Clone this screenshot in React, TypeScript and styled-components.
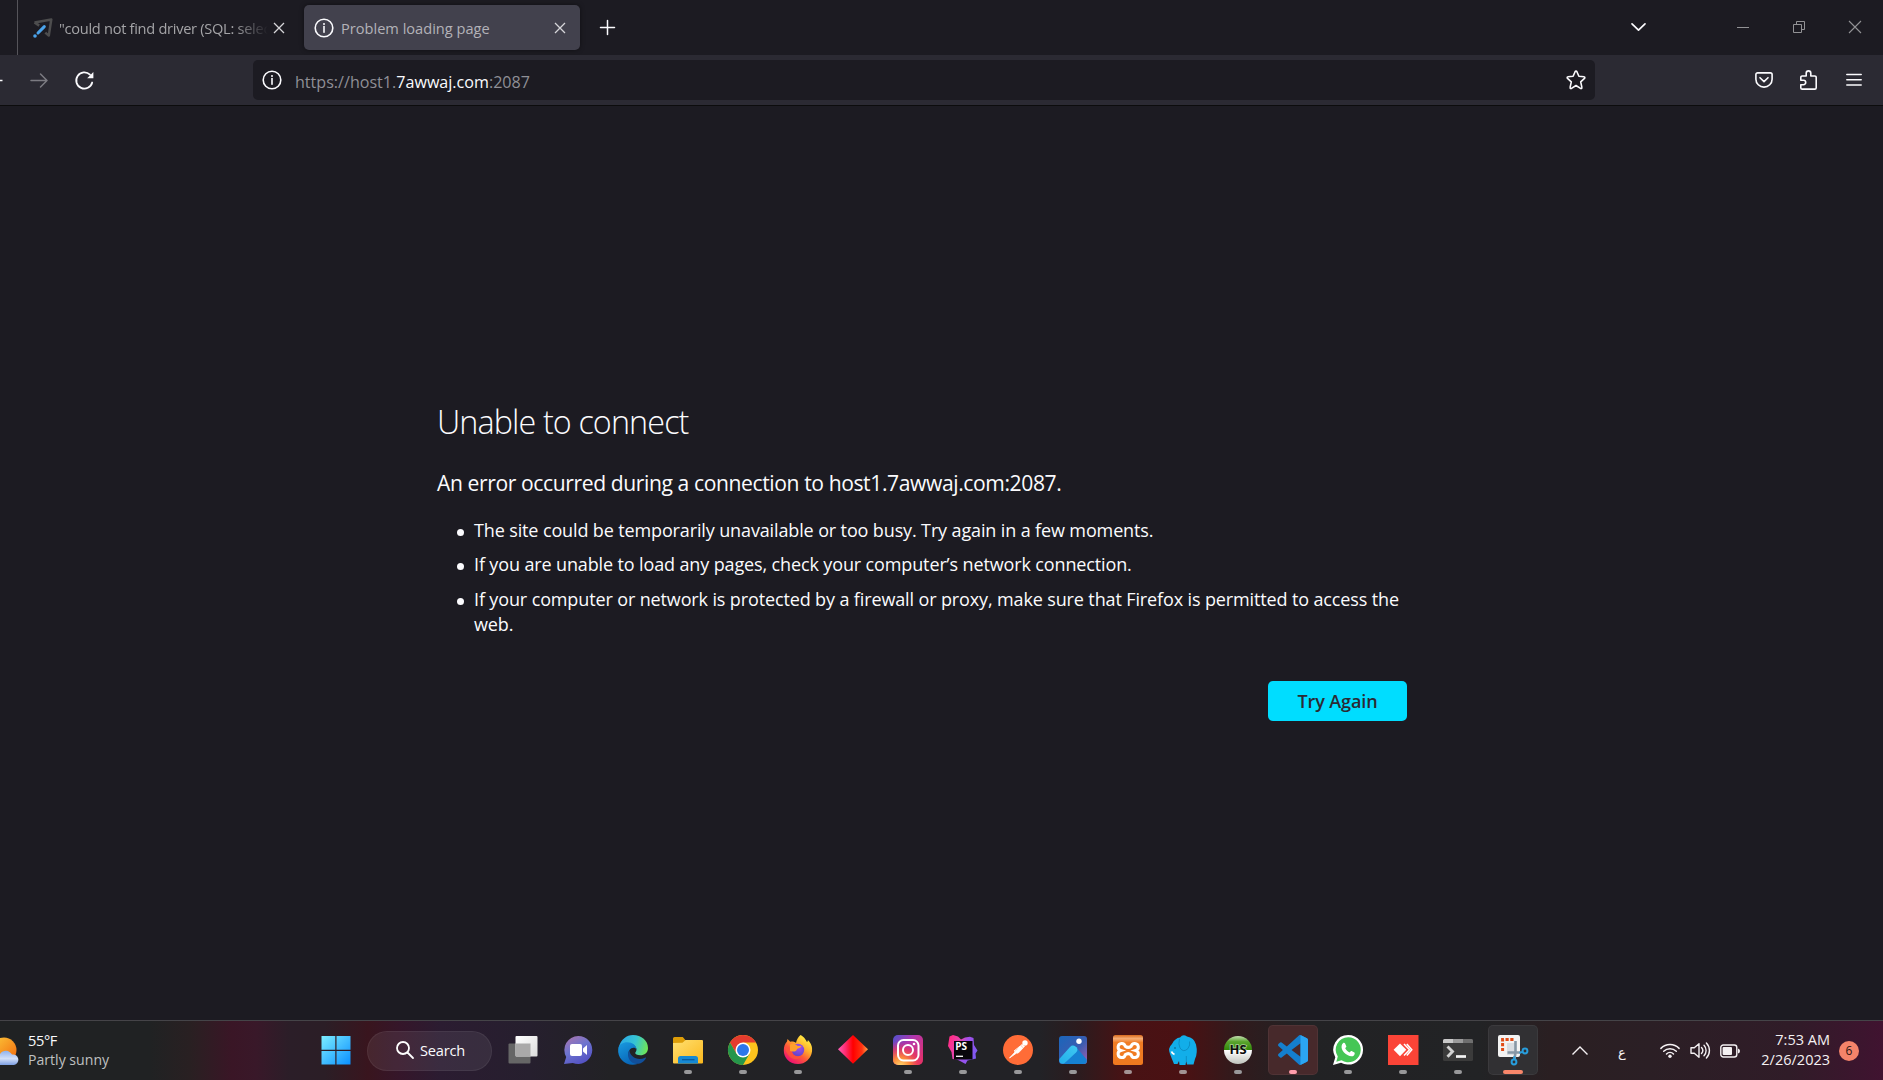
import React from 'react';
import styled, { createGlobalStyle } from 'styled-components';

const Global = createGlobalStyle`
  *, *::before, *::after { box-sizing: border-box; }
  body { margin: 0; background: #1c1b22; overflow: hidden; }
  svg { display: block; flex: none; overflow: visible; }
  button { font: inherit; border: 0; padding: 0; background: none; color: inherit; }
`;

const Desktop = styled.div`
  width: 1883px;
  height: 1080px;
  display: flex;
  flex-direction: column;
  overflow: hidden;
  background: #1c1b22;
  color: #fbfbfe;
  font-family: 'Open Sans', 'Noto Sans', sans-serif;
  white-space: nowrap;
`;

/* ---------- browser chrome ---------- */

const TabBar = styled.header`
  height: 55px;
  flex: none;
  display: flex;
  padding-left: 17px;
`;

const Tab = styled.div<{ $active?: boolean }>`
  display: flex;
  align-items: center;
  width: ${p => (p.$active ? 276 : 287)}px;
  height: ${p => (p.$active ? 45 : 55)}px;
  margin-top: ${p => (p.$active ? 5 : 0)}px;
  padding: ${p => (p.$active ? '0 15px 0 10px' : '0 20px 0 15px')};
  gap: ${p => (p.$active ? 7 : 6)}px;
  border-left: ${p => (p.$active ? '0' : '1px solid #55545a')};
  border-radius: ${p => (p.$active ? 5 : 0)}px;
  background: ${p => (p.$active ? '#42414d' : 'transparent')};
  box-shadow: ${p => (p.$active ? '0 0 5px rgba(0, 0, 0, 0.45)' : 'none')};
  color: ${p => (p.$active ? '#b3b2b8' : '#a4a4a7')};
`;

const TabTitle = styled.span<{ $fade?: boolean }>`
  flex: 1;
  min-width: 0;
  overflow: hidden;
  font-size: 14.6px;
  line-height: 24px;
  letter-spacing: ${p => (p.$fade ? -0.28 : 0)}px;
  mask-image: ${p => (p.$fade ? 'linear-gradient(90deg, #000 calc(100% - 34px), transparent 100%)' : 'none')};
`;

const CloseTab = styled.button`
  display: grid;
  place-items: center;
  color: #d6d6da;
`;

const NewTab = styled.button`
  width: 55px;
  height: 55px;
  display: grid;
  place-items: center;
`;

const WindowControls = styled.div`
  margin-left: auto;
  height: 54px;
  display: flex;
  color: #929295;
`;

const WindowButton = styled.button<{ $wide?: boolean }>`
  width: ${p => (p.$wide ? 154 : 56)}px;
  color: ${p => (p.$wide ? '#fbfbfe' : 'inherit')};
  display: grid;
  place-items: center;
`;

const NavBar = styled.nav`
  height: 51px;
  flex: none;
  display: flex;
  align-items: center;
  background: #2b2a33;
  border-bottom: 1px solid #0c0c0d;
  padding-right: 7px;
`;

const NavButtons = styled.div`
  width: 253px;
  display: flex;
  align-items: center;
`;

const NavButton = styled.button<{ $dim?: boolean; $w?: number }>`
  width: ${p => p.$w ?? 45}px;
  height: 45px;
  display: grid;
  place-items: center;
  color: ${p => (p.$dim ? '#7c7b82' : '#fbfbfe')};
`;

const BackButton = styled(NavButton)`
  justify-items: end;
  width: 17px;
  margin-left: -14px;
`;

const UrlBar = styled.div`
  width: 1342px;
  height: 40px;
  display: flex;
  align-items: center;
  gap: 13px;
  padding: 0 9px;
  border-radius: 5px;
  background: #1c1b22;
`;

const Url = styled.span`
  flex: 1;
  color: #8f8f96;
  font-size: 16.1px;
  line-height: 24px;
  padding-top: 3px;
  b { color: #fbfbfe; font-weight: 400; }
`;

const ToolbarEnd = styled.div`
  margin-left: auto;
  display: flex;
`;

/* ---------- error page ---------- */

const Page = styled.main`
  flex: 1;
  padding: 295px 476px 0 437px;
`;

const Title = styled.h1`
  margin: 0;
  font-size: 32.3px;
  font-weight: 300;
  line-height: 40px;
  letter-spacing: -0.88px;
`;

const Lead = styled.p`
  margin: 27px 0 0;
  font-size: 21.1px;
  line-height: 30px;
  letter-spacing: -0.4px;
`;

const Reasons = styled.ul`
  margin: 20px 0 0;
  padding: 0 0 0 37px;
  display: flex;
  flex-direction: column;
  gap: 9.4px;
  list-style: none;
  font-size: 18px;
  line-height: 25px;
  letter-spacing: -0.13px;
`;

const Reason = styled.li`
  position: relative;
  width: 932px;
  white-space: normal;

  &::before {
    content: '';
    position: absolute;
    left: -17px;
    top: 11px;
    width: 7px;
    height: 7px;
    border-radius: 50%;
    background: #fbfbfe;
  }
`;

const Actions = styled.div`
  display: flex;
  justify-content: flex-end;
  margin-top: 44px;
`;

const PrimaryButton = styled.button`
  && {
    width: 139px;
    height: 40px;
    border-radius: 5px;
    background: #00ddff;
    color: #2b2a33;
    font-size: 18px;
    font-weight: 600;
    letter-spacing: -0.1px;
  }
`;

/* ---------- taskbar ---------- */

const Taskbar = styled.footer`
  height: 60px;
  flex: none;
  display: flex;
  align-items: center;
  border-top: 1px solid #454448;
  background: linear-gradient(
    90deg,
    #202223 0, #202223 150px, #292022 190px, #3a1626 232px, #391829 256px,
    #2b1e28 290px, #2b1e26 325px, #39151e 368px, #35162a 400px, #2b1c31 440px, #261f2e 530px,
    #222225 610px, #222226 1040px, #2c1b1e 1080px, #481214 1125px, #4a1113 1185px, #311a1c 1235px,
    #222224 1300px, #222325 1480px, #2a1f22 1550px, #2b1f25 1650px, #301c28 1790px, #401330 1883px
  );
`;

const Weather = styled.section`
  width: 308px;
  display: flex;
  align-items: center;
  gap: 9px;
  font-size: 14.1px;
  line-height: 20px;
`;

const Stack = styled.div<{ $right?: boolean }>`
  display: flex;
  flex-direction: column;
  text-align: ${p => (p.$right ? 'right' : 'left')};
  margin-bottom: 2px;
`;

const Muted = styled.span`
  color: #bfc0c0;
`;

const Temperature = styled.span`
  font-size: 14.6px;
  letter-spacing: -0.4px;
`;

const AppRow = styled.div`
  display: flex;
  align-items: center;
`;

const Cell = styled.div`
  width: 55px;
  height: 59px;
  display: flex;
  justify-content: center;
`;

const Plate = styled.div<{ $bg?: string }>`
  width: 50px;
  height: 50px;
  margin-top: 4px;
  display: flex;
  flex-direction: column;
  align-items: center;
  justify-content: space-between;
  padding-top: 10px;
  border-radius: 5px;
  background: ${p => p.$bg ?? 'transparent'};
  box-shadow: ${p => (p.$bg ? 'inset 0 0 0 1px rgba(255, 255, 255, 0.05)' : 'none')};
`;

const Indicator = styled.span<{ $color: string; $w: number }>`
  width: ${p => p.$w}px;
  height: 4px;
  margin-bottom: 1px;
  border-radius: 2px;
  background: ${p => p.$color};
`;

const SearchBox = styled.div`
  width: 125px;
  height: 40px;
  margin: 0 3px 0 4px;
  display: flex;
  align-items: center;
  gap: 6px;
  padding: 0 0 1px 28px;
  border-radius: 20px;
  border: 1px solid rgba(255, 255, 255, 0.06);
  background: rgba(255, 255, 255, 0.075);
  font-size: 14.6px;
  letter-spacing: -0.2px;
`;

const Tray = styled.section`
  flex: 1;
  display: flex;
  align-items: center;
  padding-left: 32px;
  padding-right: 24px;
  color: #f4f0f2;
`;

const Language = styled.span`
  width: 10px;
  margin: 4px 33px 0 29px;
  text-align: center;
  font-family: 'DejaVu Sans', sans-serif;
  font-size: 13px;
`;

const Status = styled.div`
  display: flex;
  align-items: center;
  gap: 10px;
`;

const Clock = styled.div`
  margin-left: auto;
  font-size: 14.5px;
  line-height: 20px;
`;

const Badge = styled.span`
  width: 20px;
  height: 20px;
  margin-left: 9px;
  display: grid;
  place-items: center;
  border-radius: 50%;
  background: #f4846a;
  color: #2a1512;
  font-size: 12px;
  line-height: 20px;
`;

/* ---------- small glyphs ---------- */

const Info = () => (
  <svg width="20" height="20" viewBox="0 0 20 20" fill="none" stroke="#fbfbfe" strokeWidth="1.6">
    <circle cx="10" cy="10" r="8.8" />
    <path d="M10 8.6v5.6" strokeLinecap="round" />
    <circle cx="10" cy="6" r="1" fill="#fbfbfe" stroke="none" />
  </svg>
);

const Cross = ({ s = 10, w = 1.3 }: { s?: number; w?: number }) => (
  <svg width={s} height={s} viewBox={`0 0 ${s} ${s}`} stroke="currentColor" strokeWidth={w} fill="none">
    <path d={`M0 0L${s} ${s}M${s} 0L0 ${s}`} />
  </svg>
);

const Favicon = () => (
  <svg width="20" height="20" viewBox="0 0 20 20" fill="none">
    <path d="M1.5 4.4L18.3 1.4L15.8 17.6L12.3 14.6M1.5 4.4L6.2 7.6" stroke="#4d4d4e" strokeWidth="2.5" strokeLinejoin="round" />
    <path d="M5 15L11.3 8.6" stroke="#4aa3ea" strokeWidth="3" strokeLinecap="round" />
    <circle cx="2" cy="18" r="1.8" fill="#4aa3ea" />
  </svg>
);

const Forward = () => (
  <svg width="18" height="15" viewBox="0 0 18 15" fill="none" stroke="currentColor" strokeWidth="1.5" strokeLinecap="round" strokeLinejoin="round">
    <path d="M1 7.5H17M10.5 1L17 7.5L10.5 14" />
  </svg>
);

const BackLine = () => (
  <svg width="17" height="15" viewBox="0 0 17 15" fill="none" stroke="currentColor" strokeWidth="1.6">
    <path d="M0 7.5H16.5M7 1L0.5 7.5L7 14" />
  </svg>
);

const Reload = () => (
  <svg width="19" height="19" viewBox="0 0 19 19" fill="none">
    <path d="M17.2 11.5A8.1 8.1 0 1 1 15 3.7" stroke="currentColor" strokeWidth="1.8" strokeLinecap="round" />
    <path d="M18.4 1v6.3h-6.2z" fill="currentColor" />
  </svg>
);

const Star = () => (
  <svg width="20" height="20" viewBox="0 0 20 20" fill="none" stroke="#fbfbfe" strokeWidth="1.6" strokeLinejoin="round">
    <path d="M9.1 1.7a1 1 0 0 1 1.8 0l2 4.6 5.1.5a.9.9 0 0 1 .5 1.6l-3.8 3.4 1.2 5.6a.9.9 0 0 1-1.4 1L10 15.500l-4.500 2.900a.9.9 0 0 1-1.400-1l1.200-5.600L1.500 8.400a.9.9 0 0 1 .5-1.600l5.100-.5z" />
  </svg>
);

const Pocket = () => (
  <svg width="18" height="16" viewBox="0 0 18 16" fill="none" stroke="currentColor" strokeWidth="1.6" strokeLinecap="round" strokeLinejoin="round">
    <path d="M2.600.9h12.800a1.700 1.700 0 0 1 1.700 1.700v4.600a8.100 7.900 0 0 1-16.200 0V2.600A1.700 1.700 0 0 1 2.600.9z" />
    <path d="M5 5.700l4 3.900 4-3.900" />
  </svg>
);

const Puzzle = () => (
  <svg width="17" height="20" viewBox="0 0 17 20" fill="none" stroke="currentColor" strokeWidth="1.6" strokeLinejoin="round">
    <path d="M2.200 6h4V3.200a2.300 2.300 0 0 1 4.600 0V6h4a1.400 1.400 0 0 1 1.400 1.400v10.300a1.400 1.400 0 0 1-1.400 1.400H2.200A1.400 1.400 0 0 1 .8 17.700V14.700h2.700a2 2 0 0 0 0-4.400H.8V7.400A1.400 1.400 0 0 1 2.200 6z" />
  </svg>
);

const Menu = () => (
  <svg width="16" height="13" viewBox="0 0 16 13" stroke="currentColor" strokeWidth="1.5" strokeLinecap="round">
    <path d="M.8 .5H15.200M.8 5.800H15.200M.8 11.100H15.200" />
  </svg>
);

/* ---------- taskbar drawings ---------- */

const WeatherIcon = () => (
  <svg width="19" height="30" viewBox="0 0 19 30">
    <defs>
      <linearGradient id="sun" x1="0" y1="0" x2="1" y2="1"><stop stopColor="#fcc93a" /><stop offset="1" stopColor="#f2660c" /></linearGradient>
      <linearGradient id="cloud" x1="0" y1="0" x2="0" y2="1"><stop stopColor="#8fb2ee" /><stop offset=".55" stopColor="#d3e0f9" /><stop offset="1" stopColor="#7c9fe2" /></linearGradient>
    </defs>
    <circle cx="4" cy="14" r="12.500" fill="url(#sun)" />
    <path d="M-4 29V21a6 6 0 0 1 4-3 7 7 0 0 1 12 .5 5.300 5.300 0 0 1 2 10.500z" fill="url(#cloud)" />
  </svg>
);

const Windows = () => (
  <svg width="30" height="30" viewBox="0 0 30 30">
    <defs><linearGradient id="win" x1="0" y1="0" x2="1" y2="1"><stop stopColor="#7cedff" /><stop offset="1" stopColor="#0a8fff" /></linearGradient></defs>
    <path d="M.5 1h13.800v13.800H.5zM15.500 1H29.500v13.800H15.500zM.5 16h13.800V29.500H.5zM15.500 16H29.500V29.500H15.500z" fill="url(#win)" />
  </svg>
);

const TaskView = () => (
  <svg width="30" height="30" viewBox="0 0 30 30">
    <defs><linearGradient id="tv" x1="0" y1="0" x2="1" y2="1"><stop stopColor="#fff" /><stop offset="1" stopColor="#dcdcdc" /></linearGradient></defs>
    <rect x=".5" y="8.500" width="22" height="20" rx="1" fill="#666" />
    <rect x="7.500" y="1" width="22" height="20.500" rx="1" fill="url(#tv)" />
    <path d="M7.500 8.500h15v13H8.500a1 1 0 0 1-1-1z" fill="#aaa9a9" />
  </svg>
);

const Chat = () => (
  <svg width="30" height="30" viewBox="0 0 30 30">
    <defs><linearGradient id="ch" x1=".1" y1=".1" x2=".6" y2="1"><stop stopColor="#a174b2" /><stop offset=".45" stopColor="#6d74cf" /><stop offset="1" stopColor="#5452c4" /></linearGradient></defs>
    <path d="M15.200 1a14 14 0 1 1-5.400 26.900L1 29l2.200-7A14 14 0 0 1 15.200 1z" fill="url(#ch)" />
    <rect x="7" y="9" width="12" height="12" rx="2" fill="#fff" />
    <path d="M20 13.500l4-3.500v10l-4-3.500z" fill="#fff" />
  </svg>
);

const Edge = () => (
  <svg width="30" height="30" viewBox="0 0 30 30">
    <defs>
      <linearGradient id="e1" x1="0" y1=".3" x2="1" y2=".5"><stop stopColor="#2aa8e6" /><stop offset=".55" stopColor="#36c4d3" /><stop offset="1" stopColor="#6ee558" /></linearGradient>
      <linearGradient id="e2" x1="0" y1="0" x2=".5" y2="1"><stop stopColor="#199be0" /><stop offset="1" stopColor="#0866b8" /></linearGradient>
    </defs>
    <path d="M1 11.500C3 4.500 8.500 0 15 0c8.500 0 15 5.600 15 13 0 4.800-3.700 7.300-7.600 7.300-3.500 0-5.200-1-5.200-2.200 0-1 1.300-1.500 1.300-3.600C18.500 9.500 8 5 1 11.500z" fill="url(#e1)" />
    <path d="M.2 14C.5 9.500 5 7.300 9.200 7.300c5.300 0 9.300 3.200 9.300 7.200-1-2.400-5-2.300-7 .5-3 4.300.3 11.500 8 14C9 32.500-1 24 .2 14z" fill="url(#e2)" />
    <path d="M11.500 15c-3.600 5-.3 12 5 13.500 5 1.300 9.400-1.300 11.300-5 .4-.8-.2-1.200-.9-.8-7 3.400-15.500-1-15.400-7.700z" fill="#114f9a" />
  </svg>
);

const Explorer = () => (
  <svg width="30" height="30" viewBox="0 0 30 30">
    <defs><linearGradient id="ex" x1="0" y1="0" x2="1" y2="1"><stop stopColor="#ffe071" /><stop offset="1" stopColor="#fbb81d" /></linearGradient></defs>
    <path d="M0 3.500a1.500 1.500 0 0 1 1.500-1.500h8.300l2.700 3.300V10H0z" fill="#dd9d08" />
    <path d="M0 8l9.500-.2L12.500 5H29a1 1 0 0 1 1 1v21.500a1 1 0 0 1-1 1H1a1 1 0 0 1-1-1z" fill="url(#ex)" />
    <path d="M5 28.500V23.500a2.500 2.500 0 0 1 2.500-2.500h15a2.500 2.500 0 0 1 2.500 2.500v5z" fill="#1689d3" />
    <path d="M9 24.700h12.500" stroke="#095a9e" strokeWidth="1.300" />
  </svg>
);

const Chrome = () => (
  <svg width="30" height="30" viewBox="0 0 30 30">
    <circle cx="15" cy="15" r="15" fill="#fcc31d" />
    <path d="M2 7.500A15 15 0 0 1 28 7.500H15L8.500 18.750z" fill="#e33b2e" />
    <path d="M2 7.500A15 15 0 0 0 15 30l6.500-11.250H8.500z" fill="#25964b" />
    <circle cx="15" cy="15" r="7.500" fill="#fff" />
    <circle cx="15" cy="15" r="6" fill="#2c77ea" />
  </svg>
);

const Firefox = () => (
  <svg width="30" height="30" viewBox="0 0 30 30">
    <defs>
      <linearGradient id="f1" x1=".85" y1=".1" x2=".25" y2=".95"><stop stopColor="#fff044" /><stop offset=".35" stopColor="#ffb22d" /><stop offset=".62" stopColor="#ff5b38" /><stop offset="1" stopColor="#ee1271" /></linearGradient>
      <radialGradient id="f2" cx=".6" cy=".3" r=".8"><stop stopColor="#a350ef" /><stop offset="1" stopColor="#5a43c4" /></radialGradient>
    </defs>
    <path d="M17.500 0c4 2 5.300 5 6.500 7 1-.4.800-2 .8-2C28.500 8.500 29.500 12 29 16.500A14.200 14.200 0 0 1 15 29C6.500 29 .8 23 .8 15.500.8 11.500 2 8.500 4 6.500L4.500 4l2.700 2.700c2.400-.5 4.600 0 5.800 1.300C13.500 5 15 2 17.500 0z" fill="url(#f1)" />
    <circle cx="15" cy="15" r="6.200" fill="url(#f2)" />
    <path d="M7 9.500c2.500-1.500 6-.3 7.500 1.500h4c-.4 1.600-2.600 1.900-4 2.800-.8.700-.7 2-2.300 2.500-2.500.6-3.500-.6-5.200.2z" fill="#ffa02c" />
    <path d="M2 12.500c3 .5 5 2 6 4.500 2 4.500 7 5.500 11 3.500-2 4-8 5-12 1.500C4 19 2.500 16 2 12.500z" fill="#ff5a32" opacity=".65" />
  </svg>
);

const Diamond = () => (
  <svg width="30" height="30" viewBox="0 0 30 30">
    <defs><linearGradient id="di"><stop stopColor="#ff60b8" /><stop offset=".25" stopColor="#ff2b70" /><stop offset=".5" stopColor="#ff0000" /><stop offset=".8" stopColor="#ff3210" /><stop offset="1" stopColor="#ffa44a" /></linearGradient></defs>
    <path d="M15 0L30 14.300L15 28.700L0 14.300z" fill="url(#di)" />
  </svg>
);

const Instagram = () => (
  <svg width="30" height="30" viewBox="0 0 30 30">
    <defs>
      <linearGradient id="i1" x1="0" y1="0" x2="1" y2=".8"><stop stopColor="#4d52cf" /><stop offset=".45" stopColor="#b236ac" /><stop offset="1" stopColor="#e2306b" /></linearGradient>
      <radialGradient id="i2" cx=".25" cy="1.050" r=".85"><stop stopColor="#ffdc72" /><stop offset=".35" stopColor="#fc8c3a" /><stop offset=".7" stopColor="#ef3b55" stopOpacity=".7" /><stop offset="1" stopColor="#d62b80" stopOpacity="0" /></radialGradient>
    </defs>
    <rect width="30" height="30" rx="5" fill="url(#i1)" />
    <rect width="30" height="30" rx="5" fill="url(#i2)" />
    <g fill="none" stroke="#fff" strokeWidth="2">
      <rect x="5" y="5" width="20.500" height="20.500" rx="5.500" />
      <circle cx="15" cy="15" r="5" />
    </g>
    <circle cx="21" cy="9" r="1.300" fill="#fff" />
  </svg>
);

const PhpStorm = () => (
  <svg width="30" height="30" viewBox="0 0 30 30">
    <defs><linearGradient id="ps" x1="0" y1=".3" x2="1" y2=".7"><stop stopColor="#ff2d86" /><stop offset=".35" stopColor="#e347b5" /><stop offset=".5" stopColor="#a44fe8" /><stop offset="1" stopColor="#7a5af6" /></linearGradient></defs>
    <path d="M1.500 1.500L5 0l5 1.500 3 3L17 2.500l5-.8 3.500 1.300.5 7 3.500 5.500-2 3 .5 5-4 1-4.500 1-2 3.500L13 26.500l-4-2-4.500-.5L3.500 17 0 11z" fill="url(#ps)" />
    <rect x="6" y="6" width="18.500" height="18.500" fill="#08060b" />
    <text x="7.200" y="15" fill="#fff" fontFamily="'Open Sans', sans-serif" fontWeight="700" fontSize="10">PS</text>
    <path d="M8 21.300h7" stroke="#fff" strokeWidth="1.300" />
  </svg>
);

const Postman = () => (
  <svg width="30" height="30" viewBox="0 0 30 30">
    <circle cx="15" cy="15" r="15" fill="#ff6c37" />
    <path d="M6.500 23l6-6.500-1.500-.5L19 9.500l2.500 2-6.500 6.800-1-.6z" fill="#fff" stroke="#fff" strokeWidth=".8" strokeLinejoin="round" />
    <path d="M14.500 13.700l-2 2M17.500 10l2.800 3" stroke="#ffb79e" strokeWidth=".8" />
    <circle cx="22" cy="8" r="2.700" fill="#fff" />
  </svg>
);

const Photos = () => (
  <svg width="30" height="30" viewBox="0 0 30 30">
    <defs>
      <linearGradient id="p1" x1="0" y1="0" x2="1" y2="1"><stop stopColor="#1a66bb" /><stop offset=".55" stopColor="#3a5cb0" /><stop offset="1" stopColor="#a360ae" /></linearGradient>
      <linearGradient id="p2" x1="1" y1="0" x2="0" y2="1"><stop stopColor="#3fc9f2" /><stop offset="1" stopColor="#22aeea" /></linearGradient>
    </defs>
    <rect x="1" y="1" width="28" height="28" rx="3" fill="url(#p1)" />
    <path d="M12 12.500Q15 9 18 12L28.700 24.500Q29.500 29 25.500 29H6L17 17z" fill="#1681d2" />
    <path d="M1.300 24L12 12Q15 9 18.500 12.300Q20.500 15 18 17.500L6.500 28.300Q4 29.500 2.200 28Q.8 26 1.300 24z" fill="url(#p2)" />
    <circle cx="21" cy="6.300" r="2.700" fill="#fff" />
  </svg>
);

const Xampp = () => (
  <svg width="30" height="30" viewBox="0 0 30 30">
    <defs><linearGradient id="xa" x1="0" y1="0" x2="0" y2="1"><stop stopColor="#d8691d" /><stop offset=".12" stopColor="#f6ad75" /><stop offset=".25" stopColor="#f07c24" /><stop offset="1" stopColor="#f0791f" /></linearGradient></defs>
    <rect width="30" height="30" rx="2.500" fill="url(#xa)" />
    <path d="M12.200 11.200a3.600 3.600 0 1 0-4.500 4.300 3.600 3.600 0 1 0 4.500 4.300q3-2.300 6 0a3.600 3.600 0 1 0 4.500-4.300 3.600 3.600 0 1 0-4.500-4.300q-3 2.300-6 0z" fill="none" stroke="#fff" strokeWidth="3" />
  </svg>
);

const Elephant = () => (
  <svg width="30" height="30" viewBox="0 0 30 30">
    <path d="M4 9Q7 3 12 2.500Q15-1.500 19 1.500Q26 2.500 28 9.500Q30 18 27 24L25.500 29.500H19L18.200 26L17.500 30H11.500L11 26L9.500 29H6Q3.500 23 2 19Q-.5 13 4 9z" fill="#12aee9" />
    <path d="M11.500 4Q10 9 12 13Q15.500 18 20 13.500Q22.500 10 21.500 6.500M18.300 27V21" fill="none" stroke="#0c8fc6" strokeWidth="1" />
    <path d="M3.500 16.500q1 2.600 3 2.800" stroke="#fff" strokeWidth="2" fill="none" />
    <circle cx="7" cy="13" r=".8" fill="#0b5472" />
  </svg>
);

const HeidiSql = () => (
  <svg width="30" height="30" viewBox="0 0 30 30">
    <defs><linearGradient id="hs" x1="0" y1="0" x2="0" y2="1"><stop stopColor="#c6e0b2" /><stop offset=".2" stopColor="#5aa52f" /><stop offset=".49" stopColor="#338a0a" /><stop offset=".5" stopColor="#fff" /><stop offset="1" stopColor="#bfc3bc" /></linearGradient></defs>
    <circle cx="15" cy="15" r="14" fill="url(#hs)" />
    <text x="15" y="19.300" textAnchor="middle" fill="#0c0c0c" stroke="#ffffff" strokeOpacity=".55" strokeWidth="1.600" paintOrder="stroke" fontFamily="'Open Sans', sans-serif" fontWeight="700" fontSize="13">HS</text>
  </svg>
);

const VsCode = () => (
  <svg width="30" height="30" viewBox="0 0 24 24">
    <path fill="#147fce" d="M23.150 2.587L18.210.21a1.494 1.494 0 0 0-1.705.29l-9.460 8.630-4.120-3.128a.999.999 0 0 0-1.276.057L.327 7.261A1 1 0 0 0 .326 8.740L3.899 12 .326 15.260a1 1 0 0 0 .001 1.479L1.650 17.940a.999.999 0 0 0 1.276.057l4.120-3.128 9.460 8.630a1.492 1.492 0 0 0 1.704.29l4.942-2.377A1.500 1.500 0 0 0 24 20.060V3.939a1.500 1.500 0 0 0-.85-1.352zm-5.146 14.861L10.826 12l7.178-5.448v10.896z" />
    <path fill="#2ba5f2" d="M18 0l5.150 2.587a1.500 1.500 0 0 1 .85 1.352V20.060a1.500 1.500 0 0 1-.85 1.352L18 24z" />
  </svg>
);

const WhatsApp = () => (
  <svg width="30" height="30" viewBox="0 0 30 30">
    <path d="M15.200 0A14.800 14.800 0 1 1 8 27.700L0 30l2.300-7.800A14.800 14.800 0 0 1 15.200 0z" fill="#fff" />
    <path d="M15.200 2.300A12.500 12.500 0 1 1 8.500 25.300L3.300 26.700l1.500-5.100A12.500 12.500 0 0 1 15.200 2.300z" fill="#45c655" />
    <path d="M10 8.200c.5-.5 1.700-.5 2.100.2l1.200 2.800c.2.500-.2 1-1.100 2 .9 1.900 2.500 3.400 4.600 4.200.9-1.100 1.300-1.500 1.800-1.300l2.800 1.400c.7.400.2 2.200-.5 2.900-1.500 1.400-3.700 1.200-6-.1-3-1.600-5.300-4.200-6-6.400-.7-2.300-.3-4.400 1.100-5.700z" fill="#fff" />
  </svg>
);

const AnyDesk = () => (
  <svg width="30" height="30" viewBox="0 0 30 30">
    <rect width="30.500" height="30" fill="#fb4437" />
    <path d="M12 8.500l6.300 6.300L12 21.200l-6.400-6.400z" fill="#fff" />
    <path d="M16 9l5.500 5.800L16 20.600M18.800 9l5 5.800-5 5.800" stroke="#fff" strokeWidth="1.500" fill="none" />
  </svg>
);

const Terminal = () => (
  <svg width="30" height="30" viewBox="0 0 30 30">
    <rect y="4" width="30" height="22" rx="1.500" fill="#3b3b3b" />
    <path d="M0 8V5.500A1.500 1.500 0 0 1 1.500 4H10v4z" fill="#c9c9c9" />
    <path d="M10 4h10v4H10z" fill="#9b9b9b" /><path d="M20 4h8.500A1.500 1.500 0 0 1 30 5.500V8H20z" fill="#6f6f6f" />
    <path d="M4.500 11.500l5 5-5 5.300" stroke="#d2d2d2" strokeWidth="2.900" fill="none" />
    <path d="M13 21.500h10" stroke="#f4f4f4" strokeWidth="2.700" />
  </svg>
);

const Snipping = () => (
  <svg width="30" height="30" viewBox="0 0 30 30">
    <rect x="0" y="0" width="22" height="22" rx="2" fill="#f3f3f3" />
    <path d="M15.500 4.600H4.600V17.500" fill="none" stroke="#e14b16" strokeWidth="3" strokeDasharray="3.200 1.600" />
    <path d="M9 8h8v12H9z" fill="#d9dde2" />
    <path d="M17.500 6v11.500L16.500 24M9.500 17.500h13" stroke="#8797a5" strokeWidth="2.600" fill="none" />
    <g fill="none" stroke="#279ddc" strokeWidth="2"><circle cx="27" cy="16" r="2.400" /><circle cx="16" cy="27" r="2.400" /><path d="M21.500 17.800l3.200-.9M16.300 24.500v-3.300" /></g>
  </svg>
);

const Wifi = () => (
  <svg width="20" height="15" viewBox="0 0 20 15" fill="none" stroke="currentColor" strokeWidth="1.500" strokeLinecap="round">
    <path d="M.9 5.400a12.800 12.800 0 0 1 18.200 0M3.700 8.300a8.900 8.900 0 0 1 12.600 0M6.500 11a5 5 0 0 1 7 0" />
    <circle cx="10" cy="13.300" r="1.700" fill="currentColor" stroke="none" />
  </svg>
);

const Speaker = () => (
  <svg width="20" height="17" viewBox="0 0 20 17" fill="none" stroke="currentColor" strokeWidth="1.400" strokeLinecap="round" strokeLinejoin="round">
    <path d="M1 5.700h3.300L9 1.700v13.600l-4.700-4H1z" />
    <path d="M11.500 5.500a4.500 4.500 0 0 1 0 6M14 3.300a7.500 7.500 0 0 1 0 10.400M16.400 1a10.800 10.800 0 0 1 0 15" />
  </svg>
);

const Battery = () => (
  <svg width="20" height="14" viewBox="0 0 20 14" fill="none">
    <rect x=".8" y="1" width="16" height="12" rx="2.500" stroke="currentColor" strokeWidth="1.400" />
    <rect x="2.600" y="2.900" width="9.400" height="8.200" rx="1" fill="currentColor" />
    <path d="M18 4.500q2 .5 2 2.500t-2 2.500z" fill="currentColor" />
  </svg>
);

type AppItem = { icon: React.FC; color?: string; width?: number; plate?: string };

const apps: AppItem[] = [
  { icon: TaskView },
  { icon: Chat },
  { icon: Edge },
  { icon: Explorer, color: '#98989a' },
  { icon: Chrome, color: '#98989a' },
  { icon: Firefox, color: '#98989a' },
  { icon: Diamond },
  { icon: Instagram, color: '#98989a' },
  { icon: PhpStorm, color: '#98989a' },
  { icon: Postman, color: '#98989a' },
  { icon: Photos, color: '#98989a' },
  { icon: Xampp, color: '#a39394' },
  { icon: Elephant, color: '#a39394' },
  { icon: HeidiSql, color: '#98989a' },
  { icon: VsCode, color: '#ff9dab', plate: '#47292b' },
  { icon: WhatsApp, color: '#98989a' },
  { icon: AnyDesk, color: '#98989a' },
  { icon: Terminal, color: '#98989a' },
  { icon: Snipping, color: '#f8866a', width: 20, plate: '#313033' },
];

const TaskbarApp = ({ icon: Icon, color = 'transparent', width = 8, plate }: AppItem) => (
  <Cell>
    <Plate $bg={plate}>
      <Icon />
      <Indicator $color={color} $w={width} />
    </Plate>
  </Cell>
);

export default function App() {
  return (
    <Desktop>
      <Global />
      <TabBar>
        <Tab>
          <Favicon />
          <TabTitle $fade>"could not find driver (SQL: selec</TabTitle>
          <CloseTab><Cross /></CloseTab>
        </Tab>
        <Tab $active>
          <Info />
          <TabTitle>Problem loading page</TabTitle>
          <CloseTab><Cross /></CloseTab>
        </Tab>
        <NewTab>
          <svg width="15" height="15" viewBox="0 0 15 15" stroke="#fbfbfe" strokeWidth="1.500" strokeLinecap="round"><path d="M7.500.5v14M.5 7.500h14" /></svg>
        </NewTab>
        <WindowControls>
          <WindowButton $wide>
            <svg width="15" height="8" viewBox="0 0 15 8" fill="none" stroke="currentColor" strokeWidth="1.700" strokeLinecap="round" strokeLinejoin="round"><path d="M1 .8l6.500 6.300L14 .8" /></svg>
          </WindowButton>
          <WindowButton>
            <svg width="12" height="1" viewBox="0 0 12 1"><path d="M0 0h12v1H0z" fill="currentColor" /></svg>
          </WindowButton>
          <WindowButton>
            <svg width="12" height="12" viewBox="0 0 12 12" fill="none" stroke="currentColor"><path d="M.5 3.500h8v8h-8zM3.500 3.500v-3h8v8h-3" /></svg>
          </WindowButton>
          <WindowButton><Cross s={12} w={1.1} /></WindowButton>
        </WindowControls>
      </TabBar>

      <NavBar>
        <NavButtons>
          <BackButton><BackLine /></BackButton>
          <NavButton $dim $w={72}><Forward /></NavButton>
          <NavButton $w={16}><Reload /></NavButton>
        </NavButtons>
        <UrlBar>
          <Info />
          <Url>https://host1.<b>7awwaj.com</b>:2087</Url>
          <Star />
        </UrlBar>
        <ToolbarEnd>
          <NavButton><Pocket /></NavButton>
          <NavButton><Puzzle /></NavButton>
          <NavButton><Menu /></NavButton>
        </ToolbarEnd>
      </NavBar>

      <Page>
        <Title>Unable to connect</Title>
        <Lead>An error occurred during a connection to host1.7awwaj.com:2087.</Lead>
        <Reasons>
          <Reason>The site could be temporarily unavailable or too busy. Try again in a few moments.</Reason>
          <Reason>If you are unable to load any pages, check your computer’s network connection.</Reason>
          <Reason>If your computer or network is protected by a firewall or proxy, make sure that Firefox is permitted to access the web.</Reason>
        </Reasons>
        <Actions>
          <PrimaryButton>Try Again</PrimaryButton>
        </Actions>
      </Page>

      <Taskbar>
        <Weather>
          <WeatherIcon />
          <Stack>
            <Temperature>55°F</Temperature>
            <Muted>Partly sunny</Muted>
          </Stack>
        </Weather>
        <AppRow>
          <Cell><Plate><Windows /></Plate></Cell>
          <SearchBox>
            <svg width="18" height="18" viewBox="0 0 18 18" fill="none" stroke="#fff" strokeWidth="1.800" strokeLinecap="round"><circle cx="7" cy="7" r="6" /><path d="M11.500 11.500L17 17" /></svg>
            Search
          </SearchBox>
          {apps.map((app, i) => <TaskbarApp key={i} {...app} />)}
        </AppRow>
        <Tray>
          <svg width="16" height="9" viewBox="0 0 16 9" fill="none" stroke="currentColor" strokeWidth="1.400"><path d="M.5 8.500L8 1l7.500 7.500" /></svg>
          <Language>ع</Language>
          <Status><Wifi /><Speaker /><Battery /></Status>
          <Clock>
            <Stack $right><span>7:53 AM</span><span>2/26/2023</span></Stack>
          </Clock>
          <Badge>6</Badge>
        </Tray>
      </Taskbar>
    </Desktop>
  );
}
